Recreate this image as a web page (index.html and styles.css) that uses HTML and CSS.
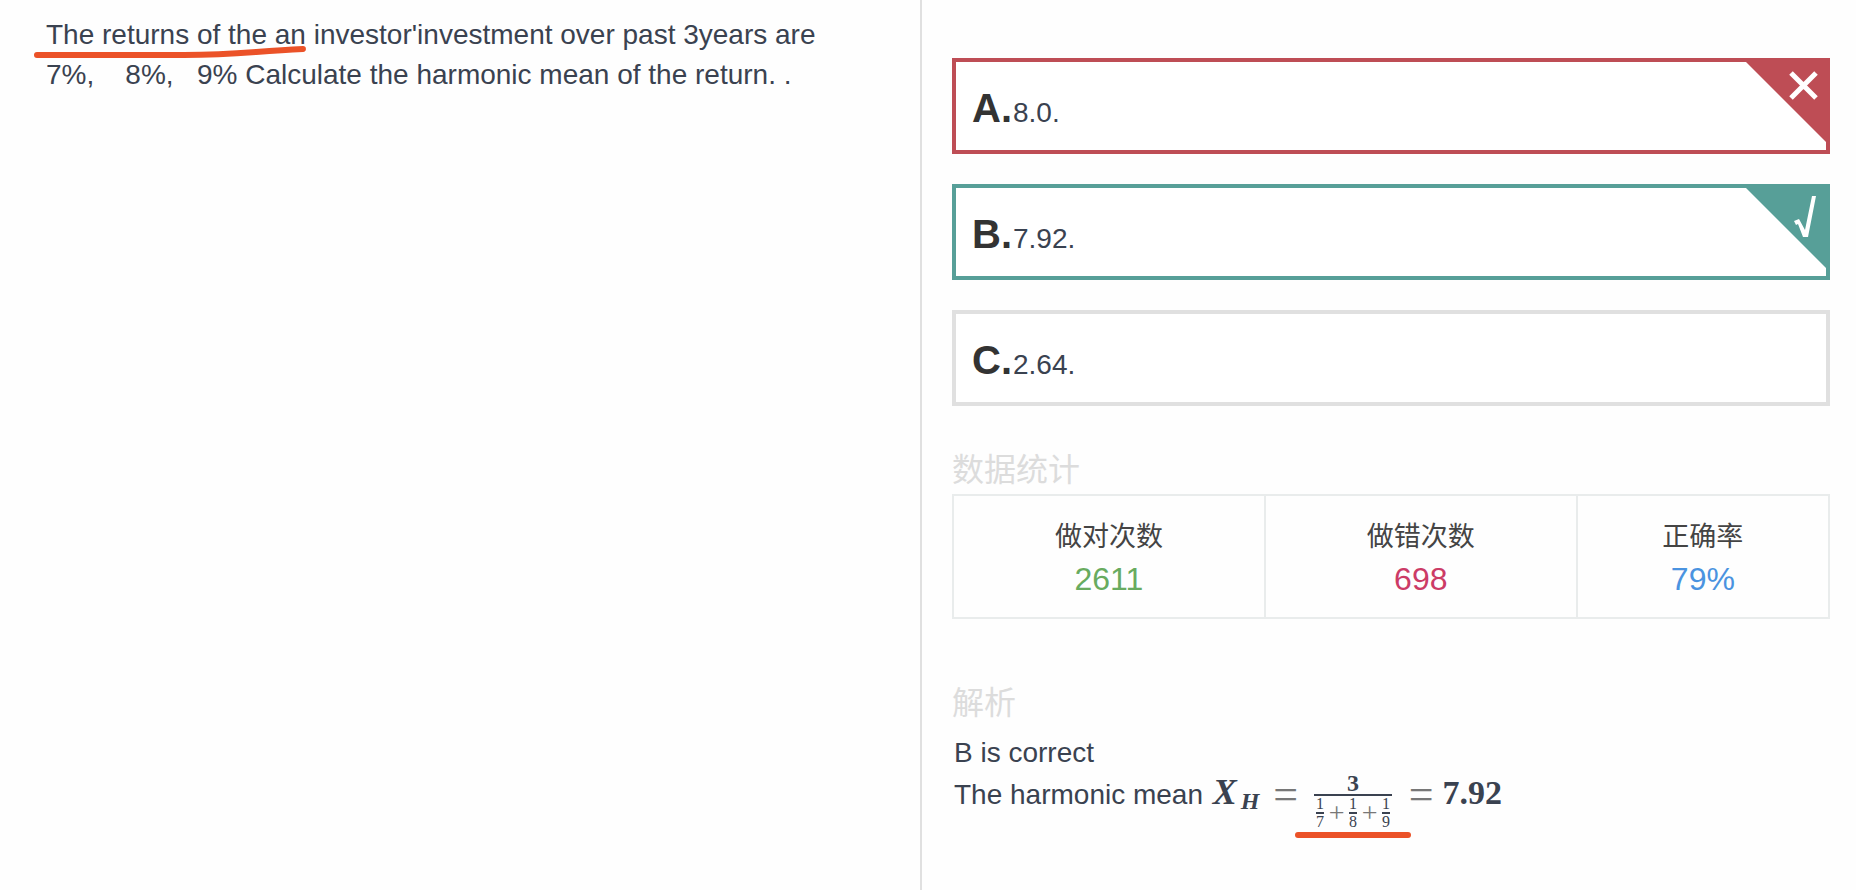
FILE: index.html
```
<!DOCTYPE html>
<html lang="zh-CN">
<head>
    <meta charset="UTF-8">
    <meta name="viewport" content="width=device-width, initial-scale=1.0">
    <title>数据统计</title>
    <link rel="stylesheet" href="styles.css">
</head>
<body>
    <main class="page">
        <section class="question">
            <p><span class="marked">The returns of the an<svg class="mark" viewBox="0 0 272 14" preserveAspectRatio="none" aria-hidden="true"><path d="M3 10H150C205 10 220 6 269 4"/></svg></span> investor'investment over past 3years are<br>7%,&nbsp;&nbsp;&nbsp; 8%,&nbsp;&nbsp; 9% Calculate the harmonic mean of the return. .</p>
        </section>

        <section class="answer">
            <div class="options">
                <button type="button" class="option wrong">
                    <b>A.</b><span>8.0.</span>
                    <svg class="corner" viewBox="0 0 80 80" aria-hidden="true">
                        <path class="fill" d="M0 0H80V80Z"/>
                        <path class="sign" d="M45 11L70 36M70 11L45 36"/>
                    </svg>
                </button>
                <button type="button" class="option right">
                    <b>B.</b><span>7.92.</span>
                    <svg class="corner" viewBox="0 0 80 80" aria-hidden="true">
                        <path class="fill" d="M0 0H80V80Z"/>
                        <path class="tick" d="M48 33L53 31L59 42L66 8H70L62 49H57L52 36L50 37Z"/>
                    </svg>
                </button>
                <button type="button" class="option">
                    <b>C.</b><span>2.64.</span>
                </button>
            </div>

            <h2 class="stats-title">数据统计</h2>
            <table class="stats">
                <thead>
                    <tr>
                        <th>做对次数</th>
                        <th>做错次数</th>
                        <th class="rate">正确率</th>
                    </tr>
                </thead>
                <tbody>
                    <tr>
                        <td class="green">2611</td>
                        <td class="red">698</td>
                        <td class="blue">79%</td>
                    </tr>
                </tbody>
            </table>

            <h2 class="note-title">解析</h2>
            <div class="note">
                <p>B is correct</p>
                <p>
                    The harmonic mean
                    <span class="var">X<sub>H</sub></span>
                    <span class="equals">=</span>
                    <span class="fraction">
                        <span class="top">3</span>
                        <span class="bottom">
                            <span class="small"><span>1</span><span>7</span></span>
                            <span class="plus">+</span>
                            <span class="small"><span>1</span><span>8</span></span>
                            <span class="plus">+</span>
                            <span class="small"><span>1</span><span>9</span></span>
                        </span>
                        <svg class="mark" viewBox="0 0 116 6" aria-hidden="true"><path d="M3 3H113"/></svg>
                    </span>
                    <span class="equals">=</span>
                    <span class="result">7.92</span>
                </p>
            </div>
        </section>
    </main>
</body>
</html>
```
FILE: styles.css
```
* {
    box-sizing: border-box;
}

body {
    margin: 0;
    background-color: #fefefe;
    color: #3a4250;
    font-family: "Liberation Sans", "Noto Sans CJK SC", sans-serif;
    font-size: 28px;
    line-height: 40px;
}

p, h2 {
    margin: 0;
}

.page {
    display: grid;
    grid-template-columns: 922fr 934fr;
    min-height: 100vh;
}

.question {
    padding: 15px 40px 15px 46px;
    border-right: 2px solid #e0e0e0;
}

.marked {
    position: relative;
}

/* red pen strokes */
.mark {
    position: absolute;
    overflow: visible;
    fill: none;
    stroke: #eb5228;
    stroke-width: 6;
    stroke-linecap: round;
}

.marked .mark {
    left: -12px;
    bottom: -9px;
    width: calc(100% + 12px);
    height: 14px;
}

.answer {
    padding: 58px 26px 20px 30px;
}

/* options */
.options {
    display: grid;
    gap: 30px;
}

.option {
    position: relative;
    display: flex;
    align-items: baseline;
    padding: 28px 16px 19px;
    border: 4px solid #e0e0e0;
    background-color: #fff;
    color: #3a4250;
    font: inherit;
    line-height: 36px;
    text-align: left;
    cursor: pointer;
}

.option b {
    color: #333;
    font-size: 40px;
}

.option span {
    margin-left: 1px;
}

.wrong {
    border-color: #be4d55;
}

.right {
    border-color: #579f98;
}

.corner {
    position: absolute;
    top: 0;
    right: 0;
    width: 80px;
    height: 80px;
}

.wrong .fill {
    fill: #be4d55;
}

.right .fill {
    fill: #579f98;
}

.sign {
    fill: none;
    stroke: #fff;
    stroke-width: 5;
}

.tick {
    fill: #fff;
}

/* statistics */
h2 {
    color: #dcdcdc;
    font-size: 32px;
    font-weight: normal;
    line-height: 48px;
}

.stats-title {
    margin-top: 40px;
}

.stats {
    width: 100%;
    border: 2px solid #e9ecec;
    border-collapse: collapse;
    table-layout: fixed;
    text-align: center;
}

.stats th, .stats td {
    border-left: 2px solid #e9ecec;
}

.stats th {
    padding: 21px 0 0;
    color: #444;
    font-size: 27px;
    font-weight: normal;
}

.stats .rate {
    width: 28.8%;
}

.stats td {
    padding: 2px 0 18px;
    font-size: 32px;
}

.green {
    color: #68ab5f;
}

.red {
    color: #cc3b66;
}

.blue {
    color: #4a93e0;
}

/* explanation */
.note-title {
    margin-top: 60px;
}

.note {
    padding: 6px 2px;
}

.var, .equals, .fraction, .result {
    display: inline-block;
    font-family: "Liberation Serif", serif;
    font-size: 34px;
    line-height: 30px;
}

.var, .result {
    font-weight: bold;
}

.var {
    margin-left: 2px;
    font-size: 36px;
    font-style: italic;
}

.var sub {
    margin-left: 4px;
    font-size: 24px;
    line-height: 1;
    vertical-align: -5px;
}

.equals {
    width: 24px;
    margin: 0 2px 0 6px;
    color: #777;
    font-size: 44px;
    text-align: center;
    vertical-align: -5px;
}

.fraction {
    position: relative;
    display: inline-flex;
    flex-direction: column;
    align-items: center;
    width: 78px;
    margin: 0 3px 0 7px;
    vertical-align: 13px;
}

.top {
    padding-bottom: 1px;
    font-size: 24px;
    font-weight: bold;
    line-height: 20px;
}

.bottom {
    display: flex;
    align-items: center;
    justify-content: space-between;
    width: 100%;
    padding: 0 2px;
    border-top: 2px solid #3a4250;
    font-size: 16px;
    line-height: 16px;
}

.small {
    display: flex;
    flex-direction: column;
}

.small span + span {
    border-top: 2px solid #3a4250;
}

.plus {
    color: #777;
    font-size: 28px;
}

.fraction .mark {
    bottom: -8px;
    left: -19px;
    width: 116px;
    height: 6px;
}
```
